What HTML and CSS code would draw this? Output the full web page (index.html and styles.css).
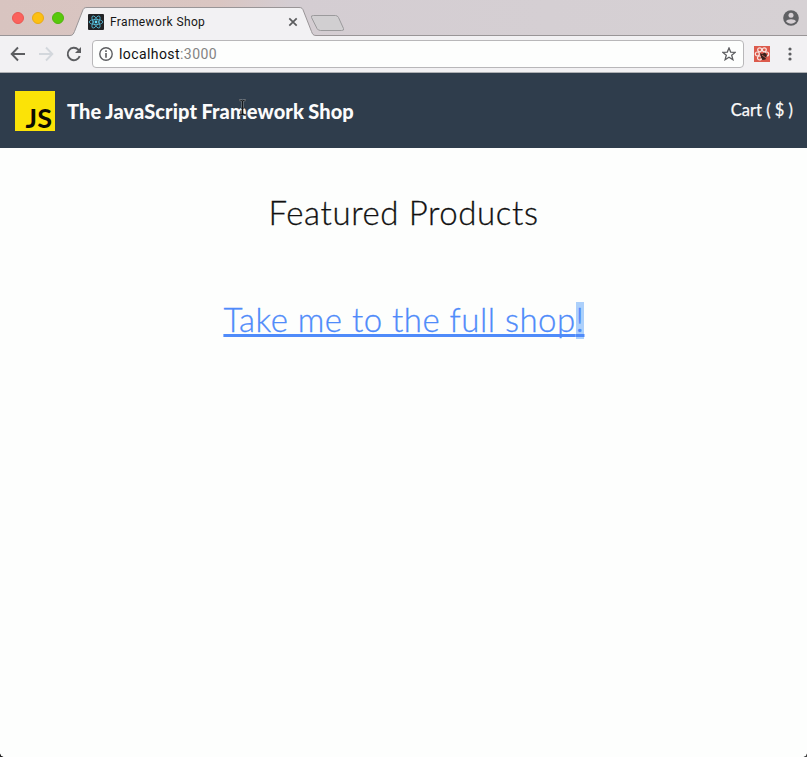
FILE: index.html
```html
<!DOCTYPE html>
<html lang="en">
<head>
<meta charset="utf-8">
<title>Framework Shop</title>
<link rel="stylesheet" href="styles.css">
</head>
<body>
<div class="window">
  <div class="tabbar">
    <svg class="tab-shape" width="807" height="36" viewBox="0 0 807 36">
      <path d="M0 35.5H70C73 35.5 73.500 33.500 74.500 31.500L82.500 11C83.500 8.500 84 7.500 87 7.500H299C302 7.500 302.500 8.500 303.500 11L311.500 31.500C312.500 34 313 35.500 316 35.500H807V37H0Z" fill="#f2f1f3" stroke="#999597"/>
      <path d="M313.500 15.500H335.500Q337.500 15.500 338.500 17.500L343.500 28.500Q344.500 30.500 341.500 30.500H320.500Q318 30.500 317 28.500L311.500 17.500Q310.500 15.500 313.500 15.500Z" fill="#d1cfd1" stroke="#9b9a9c"/>
    </svg>
    <div class="lights"><i class="red"></i><i class="yellow"></i><i class="green"></i></div>
    <svg class="favicon" width="16" height="16" viewBox="0 0 16 16">
      <rect width="16" height="16" rx="1" fill="#222326"/>
      <g fill="none" stroke="#55bedb" stroke-width=".8">
        <ellipse cx="8" cy="8" rx="6.800" ry="2.600"/>
        <ellipse cx="8" cy="8" rx="6.800" ry="2.600" transform="rotate(60 8 8)"/>
        <ellipse cx="8" cy="8" rx="6.800" ry="2.600" transform="rotate(120 8 8)"/>
      </g>
      <circle cx="8" cy="8" r="1.400" fill="#61dafb"/>
    </svg>
    <span class="tab-title">Framework Shop</span>
    <svg class="close" width="10" height="10" viewBox="0 0 10 10"><path d="M1.300 1.300L8.700 8.700M8.700 1.300L1.300 8.700" stroke="#5b5c5e" stroke-width="1.700"/></svg>
    <svg class="profile" width="16" height="16" viewBox="0 0 16 16"><circle cx="8" cy="8" r="7.800" fill="#606164"/><circle cx="8" cy="5.200" r="2.500" fill="#d6d0d4"/><path d="M3 11.300C4 8.500 12 8.500 13 11.300C10.700 14.400 5.300 14.400 3 11.300Z" fill="#d6d0d4"/></svg>
  </div>
  <div class="toolbar">
    <svg class="back" width="16" height="16" viewBox="0 0 16 16" fill="none" stroke="#5c5d60" stroke-width="1.900"><path d="M15 8H2.500M8 1.500L1.700 8L8 14.500"/></svg>
    <svg class="forward" width="16" height="16" viewBox="0 0 16 16" fill="none" stroke="#d3d7dc" stroke-width="1.900"><path d="M1 8H13.500M8 1.500L14.300 8L8 14.500"/></svg>
    <svg class="reload" width="16" height="16" viewBox="0 0 16 16"><path d="M13.700 10.200A6.200 6.200 0 1 1 12.300 3.600L13.500 4.900" fill="none" stroke="#5c5d60" stroke-width="1.900"/><path d="M15 1V7H9Z" fill="#5c5d60"/></svg>
    <div class="address">
      <svg width="14" height="14" viewBox="0 0 14 14"><circle cx="7" cy="7" r="6.200" fill="none" stroke="#5c5d60" stroke-width="1.400"/><path d="M7 3.300V4.900M7 6V10.700" stroke="#5c5d60" stroke-width="1.600"/></svg>
      <span class="url">localhost<span class="port">:3000</span></span>
      <svg class="star" width="14" height="14" viewBox="0 0 14 14"><path d="M7 1L8.700 5.100L13.200 5.400L9.700 8.200L10.900 12.700L7 10.200L3.100 12.700L4.300 8.200L.8 5.400L5.300 5.100Z" fill="none" stroke="#5c5d60" stroke-width="1.300"/></svg>
    </div>
    <svg class="extension" width="16" height="16" viewBox="0 0 16 16"><rect width="16" height="16" fill="#dc5a4c"/><g fill="none" stroke="#f8e4df" stroke-width="1.200"><circle cx="5.700" cy="3.800" r="2"/><circle cx="10.300" cy="3.800" r="2"/><circle cx="3.300" cy="8" r="2"/><circle cx="12.700" cy="8" r="2"/><circle cx="5.500" cy="12" r="2"/></g><path d="M6 7L8 8L11 6.500L13 9L11.500 13.500L8.500 14L7 11.500Z" fill="#3a211d"/><path d="M8 9L12 12" stroke="#bd6256"/></svg>
    <svg class="menu" width="4" height="14" viewBox="0 0 4 14" fill="#5c5d60"><circle cx="2" cy="2" r="1.600"/><circle cx="2" cy="7" r="1.600"/><circle cx="2" cy="12" r="1.600"/></svg>
  </div>
  <header class="header">
    <div class="logo"><span>JS</span></div>
    <span class="brand">The JavaScript Framework Shop</span>
    <span class="cart">Cart ( $ )</span>
  </header>
  <main>
    <h1><span>Featured Products</span></h1>
    <a class="shop-link"><span class="link-text">Take me to the full shop</span><span class="selected">!</span></a>
  </main>
  <svg class="cursor" width="9" height="17" viewBox="0 0 9 17" fill="none"><path d="M1 1Q4.500 1 4.500 3Q4.500 1 8 1M4.500 3V14M1 16Q4.500 16 4.500 14Q4.500 16 8 16M3 9H6" stroke="#a0a5aa" stroke-width="2"/><path d="M1 1Q4.500 1 4.500 3Q4.500 1 8 1M4.500 3V14M1 16Q4.500 16 4.500 14Q4.500 16 8 16M3 9H6" stroke="#15181b" stroke-width="1.200"/></svg>
  <i class="corner left"></i><i class="corner right"></i>
</div>
</body>
</html>
```

FILE: styles.css
```css
* { box-sizing: border-box; }
body { margin: 0; background: #fdfefd; font-family: Lato, sans-serif; overflow: hidden; }
.window { position: relative; width: 807px; height: 757px; }
svg { display: block; flex: none; }
span { white-space: nowrap; }

.tabbar { position: relative; display: flex; align-items: center; height: 36px; padding: 7px 8px 0 12px; background: linear-gradient(90deg, #d8c4c0 0, #dac6c2 220px, #d4cdd2 290px, #d6d1d4 100%); }
.tab-shape { position: absolute; left: 0; top: 0; }
.lights, .favicon, .tab-title, .close, .profile { position: relative; }
.lights { display: flex; gap: 8px; width: 76px; margin-top: -7px; }
.lights i { width: 12px; height: 12px; border-radius: 50%; border: 1px solid; }
.red { background: #fb625d; border-color: #ea5752 !important; }
.yellow { background: #fcc013; border-color: #e8aa16 !important; }
.green { background: #58c90b; border-color: #50b50d !important; }
.tab-title { margin-left: 6px; width: 178px; font: 12px/16px Roboto, sans-serif; letter-spacing: .37px; color: #161616; }
.close { margin-top: 1px; }
.profile { margin-left: auto; margin-top: -7px; }

.toolbar { display: flex; align-items: center; height: 37px; padding: 0 15px 1px 10px; background: #f2f1f3; border-bottom: 1px solid #aeb0b3; }
.forward { margin-left: 12px; }
.reload { margin-left: 12px; }
.address { display: flex; align-items: center; width: 652px; height: 28px; margin-left: 10px; padding: 0 7px 0 6px; border: 1px solid #b8b7b9; border-radius: 4px; background: #fdfefd; }
.url { margin-left: 6px; font: 14px/20px Roboto, sans-serif; letter-spacing: .42px; color: #111; }
.port { color: #838383; }
.star { margin-left: auto; }
.extension { margin-left: 10px; }
.menu { margin-left: auto; }

.header { display: flex; align-items: center; height: 75px; padding: 0 14px 0 15px; background: #2f3d4c; color: #fbfbfb; }
.logo { display: flex; align-items: flex-end; justify-content: flex-end; width: 40px; height: 40px; margin-top: 1px; padding-right: 3px; background: #fbe307; color: #0b0a02; }
.logo span { font: 700 27px/26px Lato, sans-serif; letter-spacing: 0; }
.brand { margin-left: 12px; font-size: 20px; font-weight: 900; letter-spacing: .1px; word-spacing: -.5px; }
.cart { margin: -2px 0 0 auto; font-size: 16.500px; -webkit-text-stroke: .25px; }

main { display: flex; flex-direction: column; align-items: center; }
h1 { margin: 44px 0 0; font-size: 33px; line-height: 40px; font-weight: 300; letter-spacing: .6px; color: #111; -webkit-text-stroke: .3px; }
.shop-link { display: flex; margin-top: 70px; font-size: 33px; line-height: 37px; font-weight: 300; letter-spacing: .48px; color: #4f8bfa; -webkit-text-stroke: .3px; text-decoration: underline; text-decoration-thickness: 3px; text-underline-offset: 2px; text-decoration-skip-ink: none; }
.link-text { margin-top: -1px; }
.selected { width: 8px; height: 37px; line-height: 35px; background: #acd0fb; }

.cursor { position: absolute; left: 238px; top: 99px; }
.corner { position: absolute; bottom: 0; width: 4px; height: 4px; }
.left { left: 0; background: radial-gradient(circle at 100% 0, transparent 3.500px, #222 4px); }
.right { right: 0; background: radial-gradient(circle at 0 0, transparent 3.500px, #444 4px); }
```
